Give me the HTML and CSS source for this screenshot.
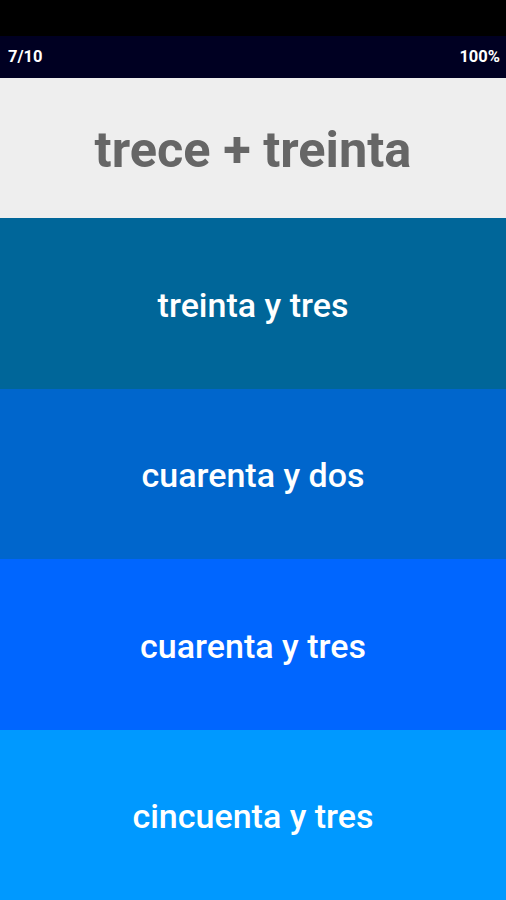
FILE: index.html
```html
<!DOCTYPE html>
<html lang="es">
<head>
<meta charset="utf-8">
<link rel="stylesheet" href="styles.css">
</head>
<body>
<div class="app">
  <div class="statusbar"></div>
  <div class="topbar">
    <span class="progress">7/10</span>
    <span class="score">100%</span>
  </div>
  <div class="question">trece + treinta</div>
  <div class="answer a1">treinta y tres</div>
  <div class="answer a2">cuarenta y dos</div>
  <div class="answer a3">cuarenta y tres</div>
  <div class="answer a4">cincuenta y tres</div>
</div>
</body>
</html>
```
FILE: styles.css
```css
html, body {
  margin: 0;
  padding: 0;
  height: 100%;
}
body {
  font-family: Roboto, "Liberation Sans", sans-serif;
}
.app {
  display: flex;
  flex-direction: column;
  height: 900px;
}
.statusbar {
  height: 36px;
  background: #000000;
}
.topbar {
  height: 42px;
  background: #000022;
  display: flex;
  justify-content: space-between;
  align-items: center;
  padding: 0 6px 0 8px;
  color: #ffffff;
  font-weight: 700;
  font-size: 16.5px;
  box-sizing: border-box;
  padding-bottom: 2px;
}
.question {
  height: 140px;
  background: #eeeeee;
  color: #666666;
  font-size: 50.5px;
  font-weight: 700;
  display: flex;
  align-items: center;
  justify-content: center;
  box-sizing: border-box;
  padding-top: 2px;
}
.answer {
  flex: 1;
  display: flex;
  align-items: center;
  justify-content: center;
  color: #ffffff;
  font-size: 34px;
  font-weight: 500;
  padding-top: 3px;
}
.a1 { background: #006699; }
.a2 { background: #0066cc; }
.a3 { background: #0066ff; }
.a4 { background: #0099ff; }
```
